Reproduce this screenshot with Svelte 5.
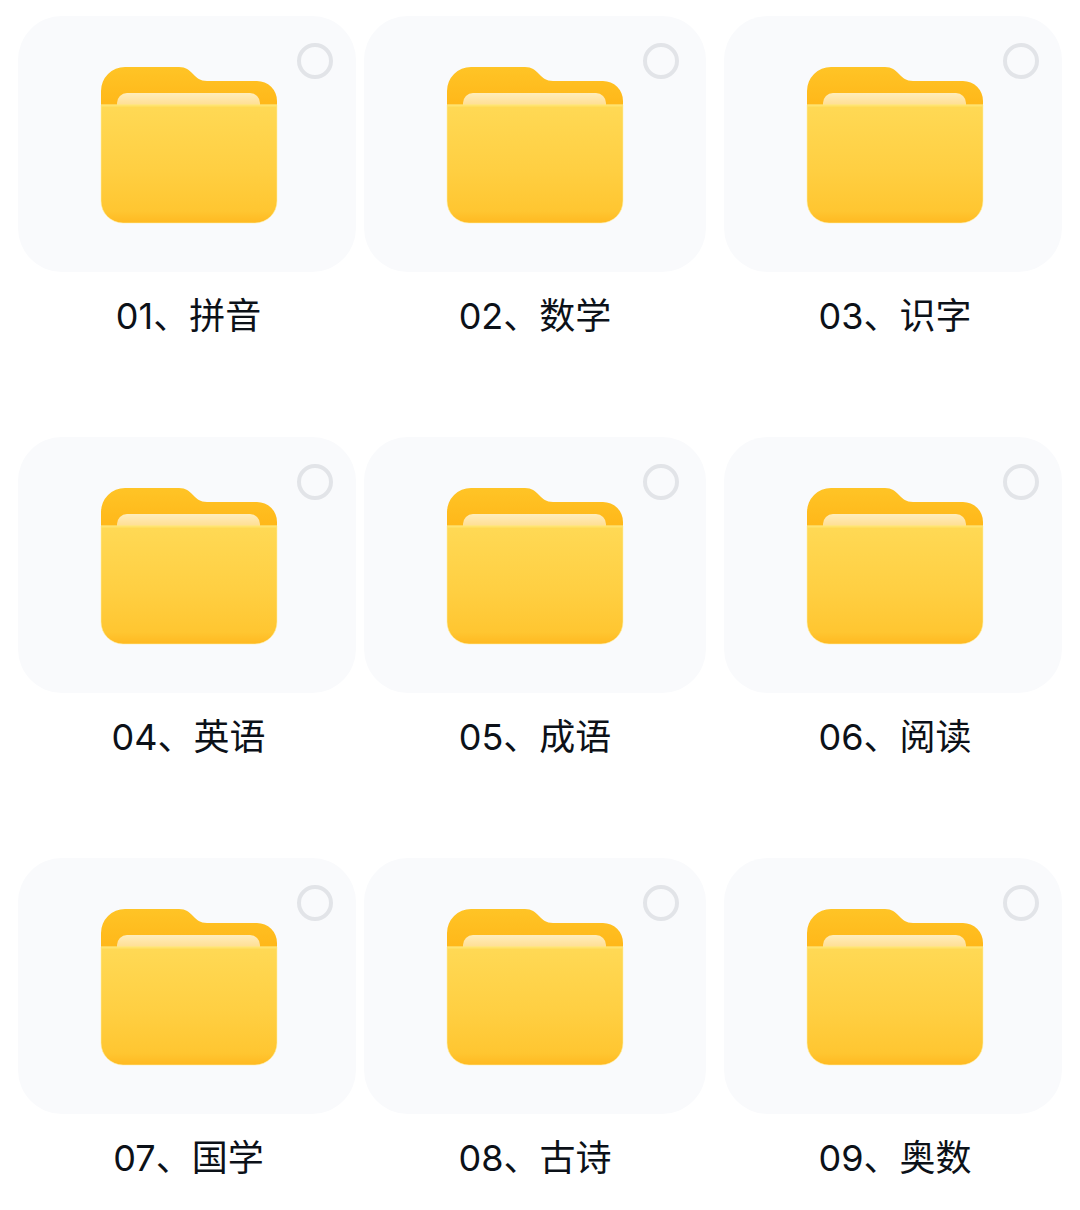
<script>
  const folders = [
    { num: "01", name: "拼音" },
    { num: "02", name: "数学" },
    { num: "03", name: "识字" },
    { num: "04", name: "英语" },
    { num: "05", name: "成语" },
    { num: "06", name: "阅读" },
    { num: "07", name: "国学" },
    { num: "08", name: "古诗" },
    { num: "09", name: "奥数" },
  ];
</script>

<div class="grid">
  {#each folders as f, i (f.num)}
    <div class="item">
      <div class="card">
        <svg class="folder" width="178" height="159" viewBox="-1 -1 178 159">
          <defs>
            <linearGradient id="back{i}" x1="0" y1="0" x2="0" y2="1">
              <stop offset="0" stop-color="#ffc426" />
              <stop offset="1" stop-color="#ffb012" />
            </linearGradient>
            <linearGradient id="paper{i}" x1="0" y1="0" x2="0" y2="1">
              <stop offset="0" stop-color="#ffedbc" />
              <stop offset="1" stop-color="#ffdc8c" />
            </linearGradient>
            <linearGradient id="front{i}" x1="0" y1="0" x2="0" y2="1">
              <stop offset="0" stop-color="#ffd955" />
              <stop offset="0.55" stop-color="#ffcf42" />
              <stop offset="0.9" stop-color="#ffc631" />
              <stop offset="1" stop-color="#ffb921" />
            </linearGradient>
          </defs>
          <path
            d="M0 24 A24 24 0 0 1 24 0 H78 C85 0 88 3 92 7 C96 11 99 14 106 14 H156 A20 20 0 0 1 176 34 V60 H0 Z"
            fill="url(#back{i})"
          />
          <path d="M16 40 V36 A10 10 0 0 1 26 26 H149 A10 10 0 0 1 159 36 V40 Z" fill="url(#paper{i})" />
          <path
            d="M0 38 H176 V134 A22 22 0 0 1 154 156 H22 A22 22 0 0 1 0 134 Z"
            fill="url(#front{i})"
            stroke="#fff0a8"
            stroke-opacity="0.55"
            stroke-width="1"
          />
          <path d="M0 38.5 H176" stroke="#ffe36e" stroke-width="2" />
        </svg>
        <span class="ring"></span>
      </div>
      <div class="label">{f.num}、{f.name}</div>
    </div>
  {/each}
</div>

<style>
  :global(body) {
    background: #fff;
  }

  .grid {
    display: grid;
    grid-template-columns: 338px 342px 338px;
    grid-auto-rows: 421px;
    column-gap: 8px;
    padding: 16px 0 0 18px;
    width: 1080px;
    height: 1210px;
    box-sizing: border-box;
    overflow: hidden;
  }

  .item:nth-child(3n) {
    margin-left: 10px;
    margin-right: -10px;
  }

  .card {
    position: relative;
    display: flex;
    justify-content: center;
    height: 256px;
    padding: 50px 0 0 4px;
    box-sizing: border-box;
    background: #f9fafc;
    border-radius: 44px;
  }

  .item:nth-child(3n + 2) .card {
    padding-left: 0;
  }

  .folder {
    display: block;
    filter: blur(0.6px);
  }

  .ring {
    position: absolute;
    top: 27px;
    right: 23px;
    width: 36px;
    height: 36px;
    box-sizing: border-box;
    border: 4px solid #e2e4e8;
    border-radius: 50%;
  }

  .item:nth-child(3n + 2) .ring {
    right: 27px;
  }

  .label {
    margin-top: 22px;
    padding-left: 3px;
    text-align: center;
    font-family: Inter, "Noto Sans CJK SC", sans-serif;
    font-size: 36px;
    font-weight: 400;
    line-height: 44px;
    color: #0c1118;
  }

  .item:nth-child(3n + 2) .label {
    padding-left: 0;
  }

  .item:nth-child(3n) .label {
    padding-left: 4px;
  }
</style>
